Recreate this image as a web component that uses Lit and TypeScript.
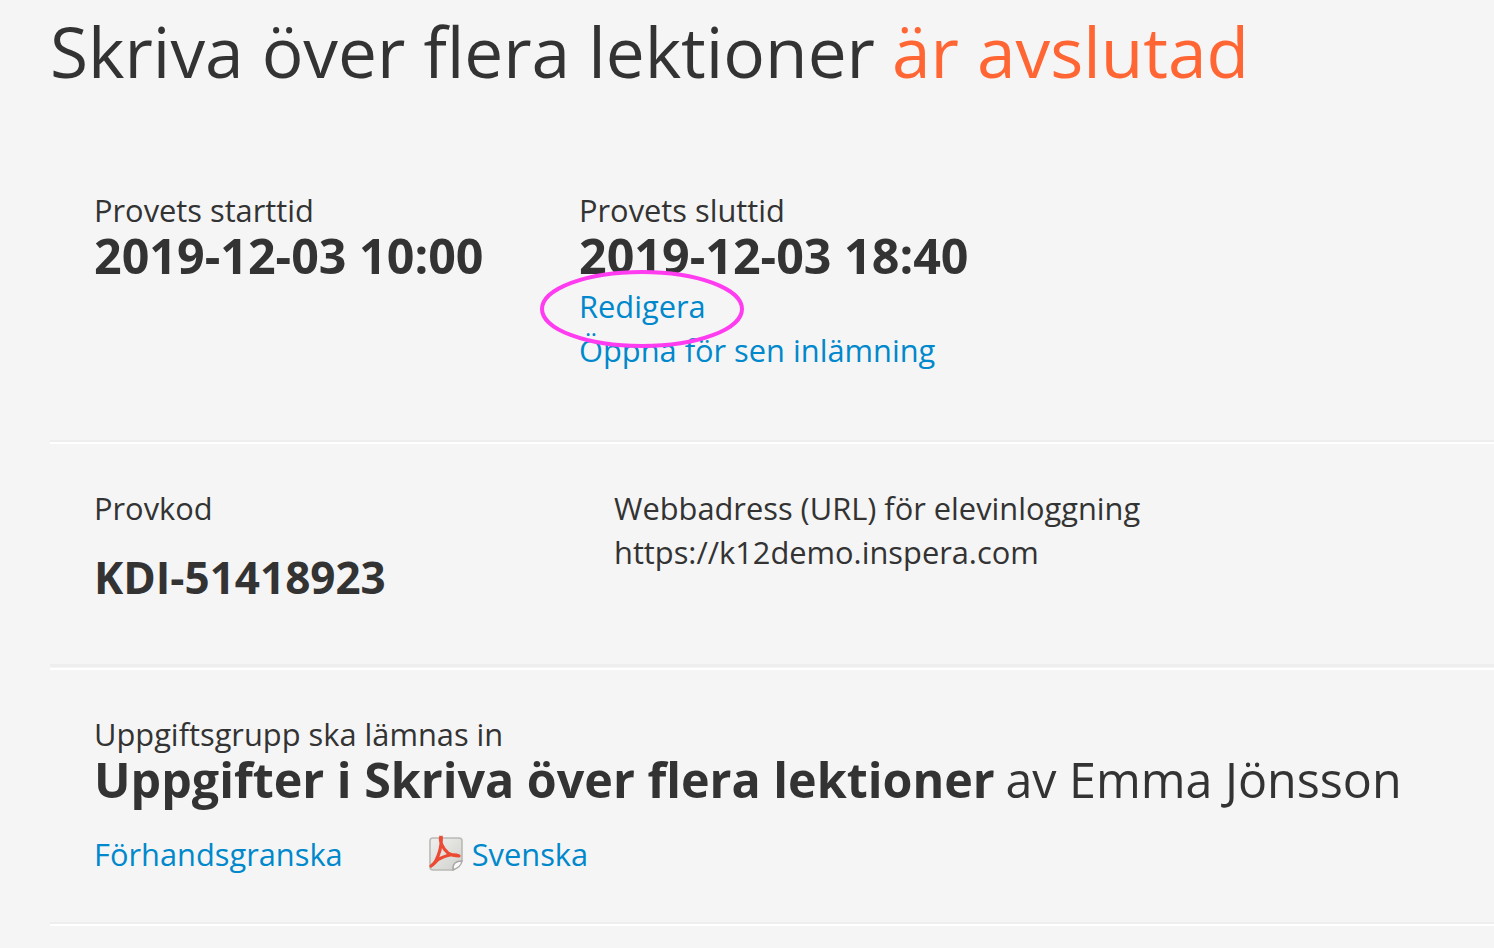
import { LitElement, html, css } from "lit";
import { customElement } from "lit/decorators.js";

@customElement("app-root")
export class AppRoot extends LitElement {
  static styles = css`
    :host { display: block; width: 1494px; height: 948px; overflow: hidden; background: #f5f5f5; color: #333; font-family: "Open Sans", sans-serif; font-size: 30.8px; line-height: 44px; }
    .page { padding-left: 50px; }
    h1 { margin: 0; padding-top: 8px; height: 151px; box-sizing: border-box; font-size: 69.4px; line-height: 86px; font-weight: 400; color: #333; }
    h1 span { color: #ff6633; margin-left: -1px; }
    .sec { padding-left: 44px; box-sizing: border-box; }
    .rule { height: 0; border-top: 2px solid #eeeeee; border-bottom: 2px solid #fff; }
    .rule.wide { height: 1px; border-top-width: 3px; }
    .times { height: 289px; padding-top: 37px; display: flex; }
    .code { height: 220px; padding-top: 42px; display: flex; }
    .group { height: 252px; padding-top: 42px; }
    .c1 { width: 485px; }
    .c2 { width: 520px; }
    .big { font-size: 48.4px; font-weight: 700; line-height: 48px; }
    .code .big { margin-top: 23px; font-size: 44px; }
    .link { color: #0088cc; display: block; }
    .rel { position: relative; }
    .big.first { margin-bottom: 5px; margin-top: -1px; }
    .ell { position: absolute; left: -40px; top: 81px; }
    .gt { font-size: 48.4px; line-height: 48px; margin-top: -1px; }
    .gt b { font-weight: 700; }
    .gt span { margin-left: -2px; }
    .links { display: flex; align-items: center; margin-top: 29px; }
    .links .link { margin-right: 85px; }
    .pdf { display: flex; align-items: center; gap: 8px; }
    .pdf .link { margin: 0; }
  `;
  render() {
    return html`<div class="page">
      <h1>Skriva över flera lektioner <span>är avslutad</span></h1>
      <div class="sec times">
        <div class="c1">Provets starttid<div class="big first">2019-12-03 10:00</div></div>
        <div class="rel">Provets sluttid<div class="big first">2019-12-03 18:40</div>
          <a class="link">Redigera</a><a class="link">Öppna för sen inlämning</a>
          <svg class="ell" width="206" height="80" viewBox="0 0 206 80"><ellipse cx="103" cy="40" rx="100" ry="37" fill="none" stroke="#ff3cf0" stroke-width="4"/></svg>
        </div>
      </div>
      <div class="rule"></div>
      <div class="sec code">
        <div class="c2">Provkod<div class="big">KDI-51418923</div></div>
        <div>Webbadress (URL) för elevinloggning<br>https://k12demo.inspera.com</div>
      </div>
      <div class="rule wide"></div>
      <div class="sec group">
        Uppgiftsgrupp ska lämnas in
        <div class="gt"><b>Uppgifter i Skriva över flera lektioner</b> <span>av Emma Jönsson</span></div>
        <div class="links"><a class="link">Förhandsgranska</a>
          <div class="pdf">
            <svg width="36" height="38" viewBox="0 0 36 38">
              <defs><linearGradient id="pg" x1="0" y1="0" x2="1" y2="1"><stop offset="0" stop-color="#f0f0ee"/><stop offset="1" stop-color="#cfcfcc"/></linearGradient></defs>
              <path d="M5 3h26q3 0 3 3v20l-9 9H5q-3 0-3-3V6q0-3 3-3z" fill="url(#pg)" stroke="#b9b9b6" stroke-width="1.6"/>
              <path d="M25 35q-1-9 9-9q-1 6-9 9z" fill="#fafafa" stroke="#a8a8a6" stroke-width="1.4"/>
              <path d="M13 1C11 6 15 14 20 18C23 20 27 21 31 21C25 18 17 21 11 24C8 26 6 29 3 31C7 29 10 22 12 15C13 10 14 5 13 1" fill="none" stroke="#ec4a33" stroke-width="3.2" stroke-linejoin="round"/>
            </svg>
            <a class="link">Svenska</a>
          </div>
        </div>
      </div>
      <div class="rule"></div>
    </div>`;
  }
}
